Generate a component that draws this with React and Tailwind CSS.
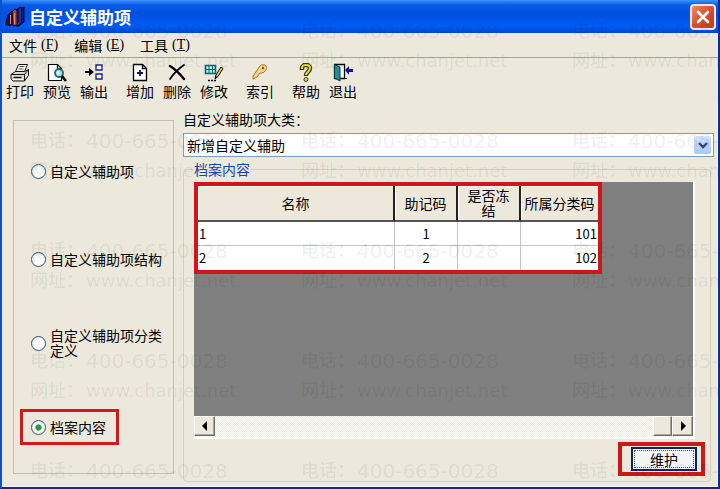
import React, { useState } from "react";

function BooksIcon() {
  return (
    <svg width="20" height="20" viewBox="0 0 20 20">
      <path d="M11 3 15 0h4v15l-5 4h-3z" fill="#10186e" stroke="#05082c" />
      <path d="M15 1v14l-3 3" fill="none" stroke="#2c49c8" />
      <path d="M7 5l3-3 2 1v15l-4 1z" fill="#b4412c" stroke="#1a0a1e" />
      <path d="M4 7l3-3v14l-3 1z" fill="#2a2a4c" stroke="#0b0b24" />
      <path d="M0 18 3 8l2-1v11z" fill="#12184c" stroke="#0b0b24" />
      <path d="M5.500 8v9M9.500 6v11" stroke="#e08a70" />
    </svg>
  );
}

function PrintIcon() {
  return (
    <svg width="20" height="20" viewBox="0 0 20 20" stroke="#111" strokeLinejoin="round">
      <path d="M5.500 8.500 8.500 1.500h9l-3 7z" fill="#fff" />
      <path d="M9.500 3.500h5M8.500 6h5" stroke="#555" />
      <path d="M1 11.500l4.500-3h9l4-2v6l-4 5.500H3l-2-2z" fill="#dcdacd" />
      <path d="M1 11.500h13.500V18M14.500 11.500l4-5" fill="none" />
      <path d="M3.500 14.500h8" strokeWidth="1.400" />
      <path d="M3 16.500h10" stroke="#fff" />
    </svg>
  );
}

function PreviewIcon() {
  return (
    <svg width="20" height="20" viewBox="0 0 20 20" stroke="#000" strokeWidth="1.200">
      <path d="M1.500 1.500h9l4 4v12h-13z" fill="#fff" />
      <path d="M10.500 1.500v4h4" fill="none" />
      <circle cx="12" cy="10" r="4" fill="#b6e0dc" stroke="#156f70" strokeWidth="1.800" />
      <path d="M11 8v4" stroke="#fff" />
      <path d="m15 13 4 5" strokeWidth="2.600" />
    </svg>
  );
}

function OutputIcon() {
  return (
    <svg width="20" height="20" viewBox="0 0 20 20">
      <path d="M1 9h6" stroke="#000" strokeWidth="2" />
      <path d="M5 5l5 4-5 4z" fill="#000" />
      <path d="M12 2h6v5h-6zM12 11h6v5h-6z" fill="#fff" stroke="#20208c" strokeWidth="1.400" />
    </svg>
  );
}

function AddIcon() {
  return (
    <svg width="20" height="20" viewBox="0 0 20 20" stroke="#000" strokeWidth="1.300">
      <path d="M3.500 1.500h9l4 4v12h-13z" fill="#fff" />
      <path d="M12.500 1.500v4h4" fill="none" />
      <path d="M10 7v6M7 10h6" stroke="#10106c" strokeWidth="1.800" />
    </svg>
  );
}

function DeleteIcon() {
  return (
    <svg width="20" height="20" viewBox="0 0 20 20" stroke="#000" fill="none" strokeLinecap="round">
      <path d="M3 3c5 3 10 8 14 13" strokeWidth="2.400" />
      <path d="M17 2C11 6 7 10 3 16" strokeWidth="1.800" />
    </svg>
  );
}

function EditIcon() {
  return (
    <svg width="20" height="20" viewBox="0 0 20 20">
      <path d="M1.500 2.500h10v8h-10z" fill="#b9ecec" stroke="#0c6469" strokeWidth="1.600" />
      <path d="M5 3v7M8.500 3v7M2 6.500h9" stroke="#0c6469" />
      <path d="m11 16 1-4 5-8 2 1.500-5 8z" fill="#e9cf51" stroke="#000" />
      <path d="m11 16 .500-3 2 1z" fill="#000" />
      <path d="M4 17.500h2M7 17.500h2M10 17.500h2" stroke="#000" strokeWidth="1.400" />
    </svg>
  );
}

function KeyIcon() {
  return (
    <svg width="20" height="20" viewBox="0 0 20 20">
      <path
        d="M8 6c1-3 4-5 7-4 2 1 2 4 0 6-1 2-3 2-5 2l-3 4-4 2v-3z"
        fill="#f6d184"
        stroke="#ad7429"
        strokeLinejoin="round"
      />
      <circle cx="13" cy="5" r="1.200" fill="#8a5518" />
      <path d="m5 13 5-5" stroke="#fff1c4" />
    </svg>
  );
}

function HelpIcon() {
  return (
    <svg width="20" height="20" viewBox="0 0 20 20" fill="none">
      <path d="M6 7V5c0-2 2-3 4-3s4 1 4 3-1 3-2 4-2 1-2 4" stroke="#3b3b0c" strokeWidth="4.500" />
      <path d="M6 6V5c0-2 2-3 4-3s4 1 4 3-1 3-2 4-2 1-2 3" stroke="#dfdc3a" strokeWidth="2" />
      <circle cx="10" cy="16.500" r="2" fill="#dfdc3a" stroke="#3b3b0c" />
    </svg>
  );
}

function ExitIcon() {
  return (
    <svg width="20" height="20" viewBox="0 0 20 20">
      <path d="M1.500 1.500h10v14h-10z" fill="#fff" stroke="#000" strokeWidth="1.300" />
      <path d="M1.500 1.500 7 4v14l-5.500-3z" fill="#2b8b90" stroke="#063c40" />
      <path d="M11 15.500h3" stroke="#000" />
      <path d="m12 7 4-4v3h4v3h-4v3z" fill="#10109c" />
    </svg>
  );
}

const menus = [
  { label: "文件", hotkey: "F" },
  { label: "编辑", hotkey: "E" },
  { label: "工具", hotkey: "T" },
];

const toolGroups = [
  [
    { label: "打印", Icon: PrintIcon },
    { label: "预览", Icon: PreviewIcon },
    { label: "输出", Icon: OutputIcon },
  ],
  [
    { label: "增加", Icon: AddIcon },
    { label: "删除", Icon: DeleteIcon },
    { label: "修改", Icon: EditIcon },
  ],
  [{ label: "索引", Icon: KeyIcon }],
  [
    { label: "帮助", Icon: HelpIcon },
    { label: "退出", Icon: ExitIcon },
  ],
];

const rows = [
  { name: "1", mnemonic: "1", frozen: "", code: "101" },
  { name: "2", mnemonic: "2", frozen: "", code: "102" },
];

function RadioOption({ value, selected, onSelect, className, children }) {
  return (
    <label className={`flex h-9 items-center gap-1 ${className}`}>
      <input
        type="radio"
        name="section"
        value={value}
        checked={selected}
        onChange={() => onSelect(value)}
        className="size-[15px] shrink-0 appearance-none rounded-full border border-[#2c5578] bg-[radial-gradient(circle_at_65%_65%,#ffffff_40%,#dcdfe0)] checked:bg-[radial-gradient(circle,#2f9a35_0_28%,#ffffff_40%,#e4ebe4)]"
      />
      <span>{children}</span>
    </label>
  );
}

function HeaderCell({ children }) {
  return (
    <th className="h-9 border-r-2 border-b-2 border-r-[#222] border-b-[#555] bg-[#ece9dc] p-0 font-normal leading-[15px] shadow-[inset_1px_1px_0_#fff] last:border-r-0">
      {children}
    </th>
  );
}

function Scrollbar() {
  const buttonStyle =
    "flex h-5 items-center justify-center border border-t-white border-l-white border-r-[#6f6d64] border-b-[#6f6d64] bg-[#ece9dc] shadow-[inset_-1px_-1px_0_#aca899]";
  return (
    <div className="flex h-[21px] bg-[#f7f6ef] bg-[repeating-conic-gradient(#eeece0_0_25%,#fdfdf9_0_50%)] bg-[length:2px_2px]">
      <button type="button" aria-label="向左" className={`${buttonStyle} w-[21px]`}>
        <svg width="6" height="10" viewBox="0 0 6 10"><path d="M5 0v10L0 5z" /></svg>
      </button>
      <div className="flex-1" />
      <div className={`${buttonStyle} w-[19px]`} />
      <button type="button" aria-label="向右" className={`${buttonStyle} w-[21px]`}>
        <svg width="6" height="10" viewBox="0 0 6 10"><path d="M1 0v10l5-5z" /></svg>
      </button>
    </div>
  );
}

function Watermark() {
  return (
    <div
      aria-hidden="true"
      className="pointer-events-none absolute inset-0 overflow-hidden pl-7 font-['DejaVu_Sans','Noto_Sans_CJK_SC',sans-serif] text-[18px] leading-[30px] font-medium text-black/[0.07]"
    >
      <div className="grid auto-rows-[110px] grid-cols-[repeat(3,271px)]">
        {Array.from({ length: 15 }, (_, i) => (
          <div key={i} className="grid auto-rows-[30px] grid-cols-[56px_auto] pt-4 whitespace-nowrap">
            <span>电话：</span>
            <span className="text-[20px]">400-665-0028</span>
            <span>网址：</span>
            <span>www.chanjet.net</span>
          </div>
        ))}
      </div>
    </div>
  );
}

function App() {
  const [section, setSection] = useState("content");

  return (
    <div className="relative flex min-h-screen flex-col overflow-hidden border-x-2 border-b-2 border-l-[#0b4fd2] border-r-[#0a2ba0] border-b-[#0a2ba0] bg-[#ece9dc] font-['Noto_Sans_CJK_SC',sans-serif] text-sm leading-4 text-black">
      <header className="flex h-[33px] items-center justify-between bg-[linear-gradient(#3c93fb_0,#0a5ae6_5px,#0050e0_14px,#005df5_26px,#0048cf_33px)] pr-0.5 pl-[3px]">
        <h1 className="flex items-center gap-1 text-[17px] leading-5 font-bold text-white">
          <BooksIcon />
          自定义辅助项
        </h1>
        <button
          type="button"
          aria-label="关闭"
          className="flex size-[26px] items-center justify-center rounded border-2 border-[#f3e4e6] bg-[linear-gradient(135deg,#e88a6c,#d9502c_50%,#b93a18)]"
        >
          <svg width="14" height="14" viewBox="0 0 14 14">
            <path d="m2 2 10 10M12 2 2 12" stroke="#fff" strokeWidth="2.600" strokeLinecap="round" />
          </svg>
        </button>
      </header>

      <nav className="flex h-[25px] items-center gap-4 border-b border-[#a3aa94] pl-[7px]">
        {menus.map((menu) => (
          <button key={menu.hotkey} type="button" className="flex items-center gap-1 whitespace-nowrap">
            {menu.label}
            <span className="font-['Liberation_Serif',serif]">
              (<u>{menu.hotkey}</u>)
            </span>
          </button>
        ))}
      </nav>

      <div className="flex gap-[18px] pt-[5px] pb-1 pl-1">
        {toolGroups.map((group, i) => (
          <div key={i} className="flex gap-[9px]">
            {group.map(({ label, Icon }) => (
              <button key={label} type="button" className="flex w-7 flex-col items-center whitespace-nowrap">
                <Icon />
                {label}
              </button>
            ))}
          </div>
        ))}
      </div>

      <main className="flex flex-1 gap-[9px] border-r border-b border-[#f6f7fb] pt-2 pr-[3px] pb-1 pl-[11px]">
        <div className="mt-[9px] mb-2 flex w-[161px] shrink-0 flex-col border border-[#c0bfc0] pt-8 pl-[17px]">
          <RadioOption value="item" selected={section === "item"} onSelect={setSection} className="mb-[52px]">
            自定义辅助项
          </RadioOption>
          <RadioOption value="structure" selected={section === "structure"} onSelect={setSection} className="mb-12">
            自定义辅助项结构
          </RadioOption>
          <RadioOption value="category" selected={section === "category"} onSelect={setSection} className="mb-12 leading-[15px]">
            自定义辅助项分类定义
          </RadioOption>
          <RadioOption
            value="content"
            selected={section === "content"}
            onSelect={setSection}
            className="-ml-[11px] w-[99px] border-[3px] border-[#cf1b1b] pl-2"
          >
            档案内容
          </RadioOption>
        </div>

        <div className="flex min-w-0 flex-1 flex-col">
          <label htmlFor="category">自定义辅助项大类：</label>
          <div className="relative mt-1.5">
            <select
              id="category"
              className="block h-6 w-full appearance-none border border-[#7f9db9] bg-white px-[3px] leading-5"
            >
              <option>新增自定义辅助</option>
            </select>
            <span className="pointer-events-none absolute inset-y-[3px] right-[3px] flex w-[17px] items-center justify-center rounded-xs bg-linear-to-b from-[#d3e0fd] to-[#adc5f7]">
              <svg width="10" height="7" viewBox="0 0 10 7" fill="none">
                <path d="m1 1 4 4 4-4" stroke="#33466f" strokeWidth="2.400" />
              </svg>
            </span>
          </div>

          <fieldset className="mt-1 mr-[3px] flex min-w-0 flex-1 flex-col rounded border border-[#d2cfbd] pt-[5px] pr-[5px] pb-[5px] pl-[10px]">
            <legend className="text-[#1746ae]">档案内容</legend>
            <div className="mr-[10px] flex flex-1 flex-col border-r-2 border-b-2 border-white bg-[#808080]">
              <div className="flex-1">
                <div className="w-fit border-4 border-[#d01618]">
                  <table className="w-[400px] table-fixed border-separate border-spacing-0 bg-white">
                    <colgroup>
                      <col className="w-[197px]" />
                      <col className="w-[63px]" />
                      <col className="w-[63px]" />
                      <col />
                    </colgroup>
                    <thead>
                      <tr>
                        <HeaderCell>名称</HeaderCell>
                        <HeaderCell>助记码</HeaderCell>
                        <HeaderCell>
                          是否冻
                          <br />
                          结
                        </HeaderCell>
                        <HeaderCell>所属分类码</HeaderCell>
                      </tr>
                    </thead>
                    <tbody className="text-[13px] [&_td]:h-6 [&_td]:border-r [&_td]:border-b [&_td]:border-[#c4c4c4] [&_td]:px-px [&_td]:py-0 [&_td:last-child]:border-r-0 [&_tr:last-child_td]:border-b-0">
                      {rows.map((row) => (
                        <tr key={row.code}>
                          <td>{row.name}</td>
                          <td className="text-center">{row.mnemonic}</td>
                          <td>{row.frozen}</td>
                          <td className="text-right">{row.code}</td>
                        </tr>
                      ))}
                    </tbody>
                  </table>
                </div>
              </div>
              <Scrollbar />
            </div>
            <div className="mt-[3px] flex justify-end">
              <div className="border-4 border-[#d01618] py-px pr-1 pl-[9px]">
                <button
                  type="button"
                  className="block h-6 w-[66px] border-2 border-[#0c2464] bg-[#f3f5f8] p-px"
                >
                  <span className="flex h-full items-center justify-center border border-dotted border-[#3d5590]">
                    维护
                  </span>
                </button>
              </div>
            </div>
          </fieldset>
        </div>
      </main>

      <Watermark />
    </div>
  );
}

export default App;
